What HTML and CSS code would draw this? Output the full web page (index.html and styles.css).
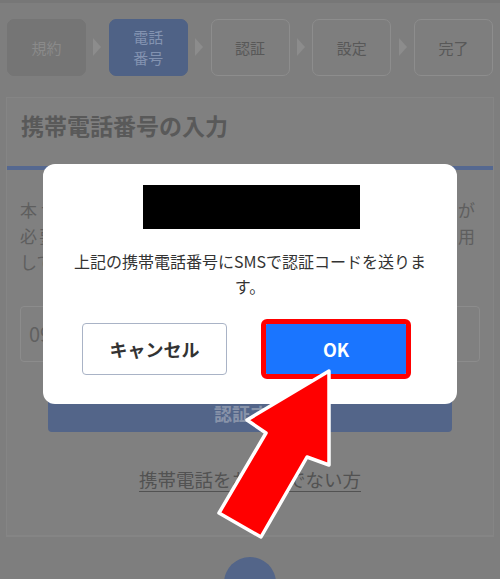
FILE: index.html
```html
<!DOCTYPE html>
<html lang="ja">
<head>
<meta charset="utf-8">
<link rel="stylesheet" href="styles.css">
</head>
<body>
<div class="page">
  <div class="topbar"></div>
  <div class="steps">
    <div class="step done">規約</div>
    <div class="sep"></div>
    <div class="step current">電話<br>番号</div>
    <div class="sep"></div>
    <div class="step">認証</div>
    <div class="sep"></div>
    <div class="step">設定</div>
    <div class="sep"></div>
    <div class="step">完了</div>
  </div>
  <div class="card">
    <div class="card-head">携帯電話番号の入力</div>
    <div class="card-body">
      <p class="desc"><span class="jl">本サービスのご利用には携帯電話番号での認証が</span><span class="jl">必要です。認証コードを受け取り本人確認後にご利用</span><span class="last">してください。</span></p>
      <div class="input">09012345678</div>
      <div class="submit">認証する</div>
      <div class="alt"><span class="link">携帯電話をお持ちでない方</span></div>
    </div>
  </div>
  <div class="fab"></div>
</div>

<div class="modal">
  <div class="redact"></div>
  <p class="msg">上記の携帯電話番号にSMSで認証コードを送ります。</p>
  <div class="actions">
    <div class="btn cancel">キャンセル</div>
    <div class="btn ok">OK</div>
  </div>
</div>

<svg class="arrow" width="500" height="579" viewBox="0 0 500 579">
  <polygon points="329,371 247,420 266,433 219,513 261,537 307,457 329,465" fill="#ff0000" stroke="#ffffff" stroke-width="3.5" stroke-linejoin="round"/>
</svg>
</body>
</html>
```
FILE: styles.css
```css
* { box-sizing: border-box; }
html, body {
  margin: 0;
  padding: 0;
}
body {
  width: 500px;
  height: 579px;
  overflow: hidden;
  background: #7e7e7e;
  font-family: "Noto Sans CJK JP", "Noto Sans", sans-serif;
  position: relative;
}
.page {
  display: flex;
  flex-direction: column;
}
.topbar {
  height: 3px;
  background: #777777;
}
.steps {
  display: flex;
  align-items: center;
  justify-content: space-between;
  padding: 0 7px 0 7px;
  margin-top: 15px;
  height: 58px;
}
.step {
  width: 79px;
  height: 57px;
  border-radius: 7px;
  border: 1px solid #8d8d8d;
  display: flex;
  align-items: center;
  justify-content: center;
  text-align: center;
  font-size: 15px;
  line-height: 21px;
  color: #585858;
}
.step.done {
  background: #757575;
  border-color: #757575;
  color: #8a8a8a;
}
.step.current {
  background: #4f6286;
  border-color: #4f6286;
  color: #8393b1;
}
.sep {
  width: 0;
  height: 0;
  border-top: 9px solid transparent;
  border-bottom: 9px solid transparent;
  border-left: 8px solid #8c8c8c;
}
.card {
  margin: 21px 6px 0 6px;
  height: 440px;
  background: #808080;
  border: 1px solid #858585;
  border-bottom-width: 2px;
}
.card-head {
  height: 72px;
  padding: 11px 0 0 14px;
  font-size: 23px;
  font-weight: bold;
  color: #595959;
  line-height: 32px;
  border-bottom: 4px solid #556890;
}
.card-body {
  padding: 27px 13px 0 13px;
  display: flex;
  flex-direction: column;
}
.desc {
  margin: 0;
  font-size: 17px;
  line-height: 26px;
  color: #5e5e5e;
  padding-right: 5px;
}
.desc .jl {
  display: block;
  text-align: justify;
  text-align-last: justify;
}
.desc .last {
  display: block;
}
.input {
  margin-top: 31px;
  height: 56px;
  border: 1px solid #8c8c8c;
  border-radius: 4px;
  padding: 0 8px;
  font-size: 20px;
  line-height: 54px;
  color: #606060;
}
.submit {
  margin: 24px 28px 0 28px;
  height: 46px;
  background: #536589;
  border-radius: 4px;
  display: flex;
  align-items: flex-end;
  justify-content: center;
  padding-bottom: 6px;
  font-size: 18px;
  font-weight: bold;
  color: #8893a9;
}
.alt {
  margin-top: 33px;
  text-align: center;
}
.link {
  font-size: 18.5px;
  line-height: 28px;
  color: #525252;
  text-decoration: underline;
  text-underline-offset: 4px;
  text-decoration-thickness: 1px;
}
.fab {
  align-self: center;
  width: 52px;
  height: 52px;
  border-radius: 50%;
  background: #536589;
  margin-top: 20px;
}
.modal {
  position: absolute;
  left: 43px;
  top: 164px;
  width: 414px;
  height: 240px;
  background: #ffffff;
  border-radius: 12px;
  padding: 21px 0 0 0;
  display: flex;
  flex-direction: column;
  align-items: center;
}
.redact {
  width: 217px;
  height: 44px;
  background: #000000;
  margin-left: 3px;
}
.msg {
  margin: 20px 0 0 0;
  width: 370px;
  text-align: center;
  font-size: 16px;
  line-height: 25px;
  color: #333333;
}
.actions {
  display: flex;
  align-self: flex-start;
  margin: 24px 0 0 39px;
  align-items: center;
}
.btn {
  display: flex;
  align-items: center;
  justify-content: center;
  font-size: 18px;
  font-weight: bold;
}
.cancel {
  width: 145px;
  height: 52px;
  border: 1px solid #a9b3c6;
  border-radius: 4px;
  color: #333333;
}
.ok {
  width: 140px;
  height: 50px;
  margin-left: 39px;
  background: #1a75ff;
  color: #ffffff;
  outline: 5px solid #ff0000;
  border-radius: 1px;
}
.arrow {
  position: absolute;
  left: 0;
  top: 0;
}
```
